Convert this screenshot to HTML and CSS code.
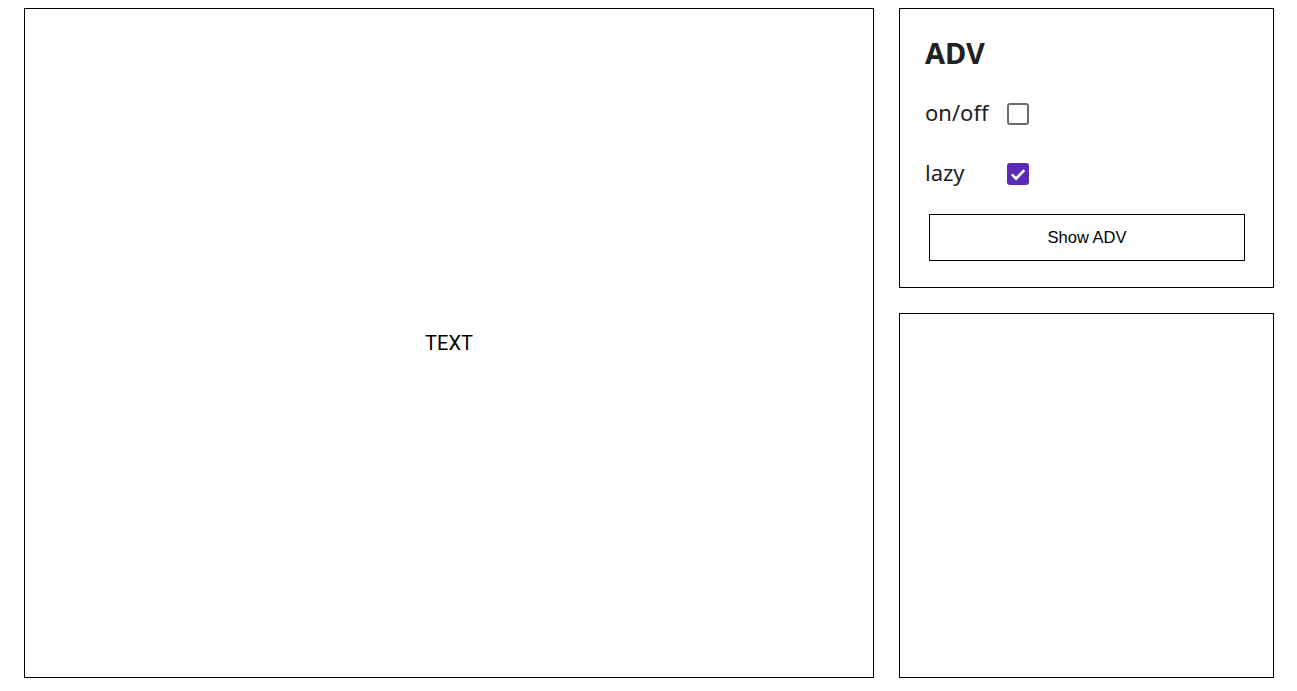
FILE: index.html
```html
<!DOCTYPE html>
<html lang="en">
<head>
<meta charset="utf-8">
<title>ADV</title>
<link rel="stylesheet" href="styles.css">
</head>
<body>
  <main class="main">
    <span class="main-text">TEXT</span>
  </main>
  <aside class="side">
    <section class="card">
      <h2 class="card-title">ADV</h2>
      <label class="row">
        <span class="row-label">on/off</span>
        <span class="check"></span>
      </label>
      <label class="row">
        <span class="row-label">lazy</span>
        <span class="check check-on">
          <svg viewBox="0 0 22 22" width="22" height="22" aria-hidden="true"><path d="M4.8 11.4 L9.1 15.6 L17.3 7.2" fill="none" stroke="#fff" stroke-width="2.6"/></svg>
        </span>
      </label>
      <button class="btn" type="button">Show ADV</button>
    </section>
    <section class="card-empty"></section>
  </aside>
</body>
</html>
```
FILE: styles.css
```css
html, body {
  margin: 0;
  background: #fff;
}
body {
  box-sizing: border-box;
  height: 691px;
  padding: 8px 23px 13px 24px;
  display: flex;
  gap: 25px;
  font-family: "Noto Sans", sans-serif;
  color: #222;
}
.main {
  box-sizing: border-box;
  width: 850px;
  height: 670px;
  border: 1px solid #000;
  display: flex;
  align-items: center;
  justify-content: center;
}
.main-text {
  font-family: Roboto, sans-serif;
  font-size: 20px;
  color: #000;
}
.side {
  width: 375px;
  display: flex;
  flex-direction: column;
  gap: 25px;
}
.card {
  box-sizing: border-box;
  height: 280px;
  border: 1px solid #000;
  padding: 25px;
  display: flex;
  flex-direction: column;
}
.card-empty {
  box-sizing: border-box;
  height: 365px;
  border: 1px solid #000;
}
.card-title {
  margin: 0;
  font-size: 29px;
  font-weight: 700;
  line-height: 38px;
  color: #222;
}
.row {
  display: flex;
  align-items: center;
  height: 40px;
  margin-top: 20px;
}
.row:first-of-type {
  margin-top: 22px;
}
.row-label {
  width: 82px;
  padding-bottom: 4px;
  font-size: 22px;
  color: #222;
}
.check {
  box-sizing: border-box;
  width: 22px;
  height: 22px;
  border: 2px solid #6a6a6a;
  border-radius: 3px;
  display: flex;
}
.check-on {
  border: none;
  background: #5a2bb6;
}
.btn {
  box-sizing: border-box;
  width: 316px;
  height: 47px;
  margin: 20px 0 0 4px;
  border: 1px solid #000;
  background: #fff;
  font-family: "Liberation Sans", Arial, sans-serif;
  font-size: 16.5px;
  color: #000;
  padding: 0;
}
```
